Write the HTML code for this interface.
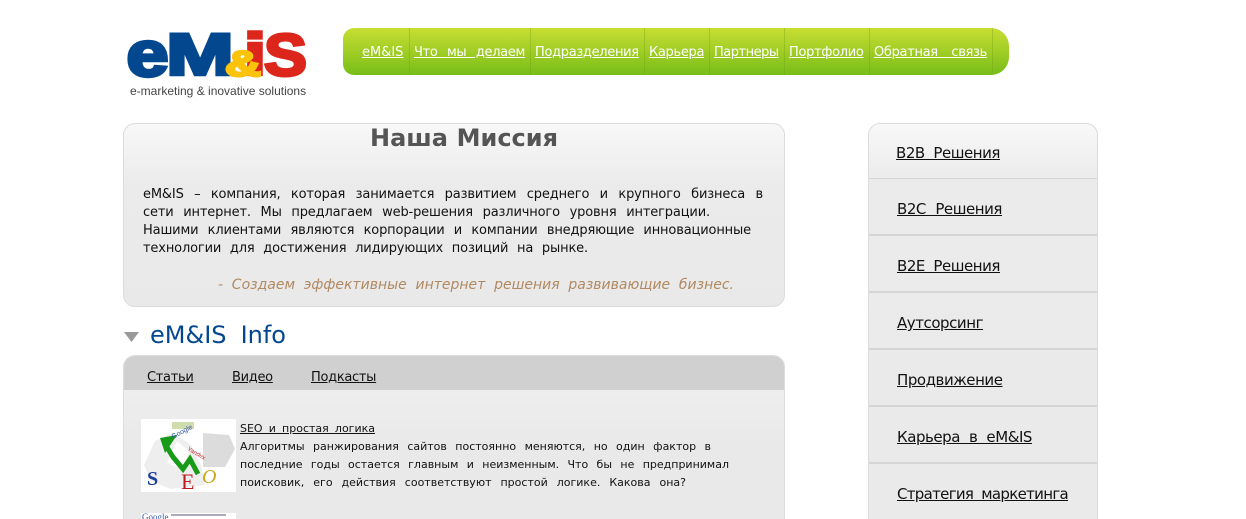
<!DOCTYPE html>
<html lang="ru"><head><meta charset="utf-8"><title>eM&amp;IS</title>
<style>
html,body{margin:0;padding:0;background:#fff;width:1246px;height:519px;overflow:hidden}
body{position:relative;font-family:"DejaVu Sans",sans-serif;color:#000}
.a{position:absolute;white-space:nowrap}
a{color:inherit;text-decoration:underline;display:block}
.j{text-align-last:justify;text-align:justify;white-space:normal}
.nav{left:343px;top:28px;width:666px;height:47px;border-radius:11px 18px 18px 11px;background:linear-gradient(#c8de33,#78bd18)}
.sep{position:absolute;top:28px;width:1px;height:47px;background:rgba(110,160,20,.35)}
.n{top:45px;font-size:13px;line-height:16px;color:#fff;letter-spacing:-.32px;word-spacing:3px}
.box{box-sizing:border-box;border:1px solid #dcdcdc;border-radius:12px}
.t{font-size:13px;line-height:16px;color:#111;letter-spacing:-.15px;left:143px}
.s{font-size:15px;line-height:18px;left:897px;color:#111;letter-spacing:-.45px}
.div{position:absolute;left:869px;width:228px;background:#d5d5d5}
.l{font-size:11px;line-height:14px;left:240px;color:#111}
.tab{top:370px;font-size:13px;line-height:16px;color:#111;letter-spacing:-.3px}
</style></head><body>

<svg class="a" style="left:120px;top:20px" width="195" height="64" viewBox="0 0 195 64">
<text x="6.500" y="56" font-family="Liberation Sans" font-weight="700" font-size="64" fill="#03478f" textLength="42" lengthAdjust="spacingAndGlyphs" stroke="#03478f" stroke-width="3.500">e</text>
<text x="46.500" y="54.500" font-family="Liberation Sans" font-weight="700" font-size="58" fill="#03478f" textLength="67" lengthAdjust="spacingAndGlyphs" stroke="#03478f" stroke-width="3.500">M</text>
<text x="124" y="54.500" font-family="Liberation Sans" font-weight="700" font-size="58" fill="#dc261c" textLength="22" lengthAdjust="spacingAndGlyphs" stroke="#dc261c" stroke-width="3.500">i</text>
<text x="144" y="55.500" font-family="Liberation Sans" font-weight="700" font-size="59" fill="#dc261c" textLength="43" lengthAdjust="spacingAndGlyphs" stroke="#dc261c" stroke-width="3">S</text>
<text x="105" y="56" font-family="Liberation Sans" font-weight="700" font-size="36" fill="#fcc30b" stroke="#fcc30b" stroke-width="2.500" textLength="36" lengthAdjust="spacingAndGlyphs">&amp;</text>
</svg>
<div class="a" style="left:130px;top:84px;font:12px/14px 'Liberation Sans',sans-serif;color:#444">e-marketing &amp; inovative solutions</div>

<div class="a nav"></div>
<i class="sep" style="left:409px"></i><i class="sep" style="left:530px"></i><i class="sep" style="left:644px"></i><i class="sep" style="left:709px"></i><i class="sep" style="left:784px"></i><i class="sep" style="left:869px"></i><i class="sep" style="left:992px"></i>
<a class="a n" style="left:362px;letter-spacing:0">eM&amp;IS</a>
<a class="a n j" style="left:414px;width:111px">Что мы делаем</a>
<a class="a n" style="left:535px">Подразделения</a>
<a class="a n" style="left:649px">Карьера</a>
<a class="a n" style="left:714px;letter-spacing:-.5px">Партнеры</a>
<a class="a n" style="left:789px">Портфолио</a>
<a class="a n j" style="left:874px;width:113px">Обратная связь</a>

<div class="a box" style="left:123px;top:123px;width:662px;height:184px;background:linear-gradient(#f8f8f8 0,#ebebeb 60px,#e9e9e9 100%)"></div>
<div class="a j" style="left:370px;top:123px;width:188px;font-size:24px;line-height:30px;font-weight:700;color:#555">Наша Миссия</div>
<div class="a t j" style="top:187px;width:620px">eM&amp;IS – компания, которая занимается развитием среднего и крупного бизнеса в</div>
<div class="a t j" style="top:205px;width:567px">сети интернет. Мы предлагаем web-решения различного уровня интеграции.</div>
<div class="a t j" style="top:223px;width:608px">Нашими клиентами являются корпорации и компании внедряющие инновационные</div>
<div class="a t j" style="top:241px;width:445px">технологии для достижения лидирующих позиций на рынке.</div>
<div class="a j" style="left:218px;top:276px;width:516px;font-size:14px;line-height:18px;font-style:italic;color:#b08a62">- Создаем эффективные интернет решения развивающие бизнес.</div>

<svg class="a" style="left:124px;top:332px" width="16" height="11"><path d="M0 0H15L7.500 10Z" fill="#999"/></svg>
<div class="a j" style="left:150px;top:320px;width:136px;font-size:24px;line-height:30px;color:#03478f">eM&amp;IS Info</div>

<div class="a box" style="left:123px;top:355px;width:662px;height:180px;background:linear-gradient(#eeeeee 34px,#e9e9e9 90px);overflow:hidden"><div style="height:34px;background:#d0d0d0"></div></div>
<a class="a tab" style="left:147px">Статьи</a>
<a class="a tab" style="left:232px">Видео</a>
<a class="a tab" style="left:311px">Подкасты</a>

<svg class="a" style="left:141px;top:419px" width="95" height="73" viewBox="0 0 95 73">
<rect width="95" height="73" fill="#fff"/>
<path d="M62 14L88 16 94 30 84 48 62 48Z" fill="#dcdcdc"/>
<path d="M3 46L14 22 32 14 50 26 60 46 64 66 30 70 10 62Z" fill="#eeeeee"/>
<path d="M36 22L48 32 42 50 26 44Z" fill="#fdfdfd"/>
<rect x="31" y="3" width="22" height="7" fill="#cfdcae"/>
<path d="M24 25L32 38 42 50 49 40 57 55" fill="none" stroke="#179a17" stroke-width="5"/>
<path d="M19 19L36 16 24 34Z" fill="#179a17"/>
<text x="6" y="66" font-family="Liberation Serif" font-weight="700" font-size="20" fill="#1e3e9c">S</text>
<text x="40" y="70" font-family="Liberation Serif" font-size="22" fill="#b81c1c">E</text>
<text x="61" y="64" font-family="Liberation Serif" font-style="italic" font-size="20" fill="#c8a818">O</text>
<text x="32" y="20" font-family="Liberation Sans" font-size="7" fill="#3355aa" transform="rotate(-28 32 20)">Google</text>
<text x="46" y="31" font-family="Liberation Sans" font-size="6" fill="#c03030" transform="rotate(30 46 31)">Yandex</text>
</svg>
<a class="a l j" style="top:422px;width:135px">SEO и простая логика</a>
<div class="a l j" style="top:440px;width:471px">Алгоритмы ранжирования сайтов постоянно меняются, но один фактор в</div>
<div class="a l j" style="top:458px;width:489px">последние годы остается главным и неизменным. Что бы не предпринимал</div>
<div class="a l j" style="top:476px;width:446px">поисковик, его действия соответствуют простой логике. Какова она?</div>
<svg class="a" style="left:141px;top:513px" width="95" height="6"><rect width="95" height="6" fill="#fff"/><text x="1" y="7" font-family="Liberation Serif" font-size="9" fill="#3355aa">Google</text><rect x="30" y="1" width="55" height="2" fill="#aab"/></svg>

<div class="a box" style="left:868px;top:123px;width:230px;height:420px;background:linear-gradient(#f8f8f8 0,#ebebeb 56px,#eaeaea 100%)"></div>
<i class="div" style="top:178px;height:1px"></i>
<i class="div" style="top:234px;height:2px"></i>
<i class="div" style="top:291px;height:2px"></i>
<i class="div" style="top:348px;height:2px"></i>
<i class="div" style="top:405px;height:2px"></i>
<i class="div" style="top:462px;height:2px"></i>
<a class="a s j" style="left:896px;top:144px;width:104px">B2B Решения</a>
<a class="a s j" style="top:200px;width:105px">B2C Решения</a>
<a class="a s j" style="top:257px;width:103px">B2E Решения</a>
<a class="a s" style="top:314px">Аутсорсинг</a>
<a class="a s" style="top:371px">Продвижение</a>
<a class="a s j" style="top:428px;width:135px">Карьера в eM&amp;IS</a>
<a class="a s j" style="top:485px;width:171px;letter-spacing:-.7px">Стратегия маркетинга</a>
</body></html>
